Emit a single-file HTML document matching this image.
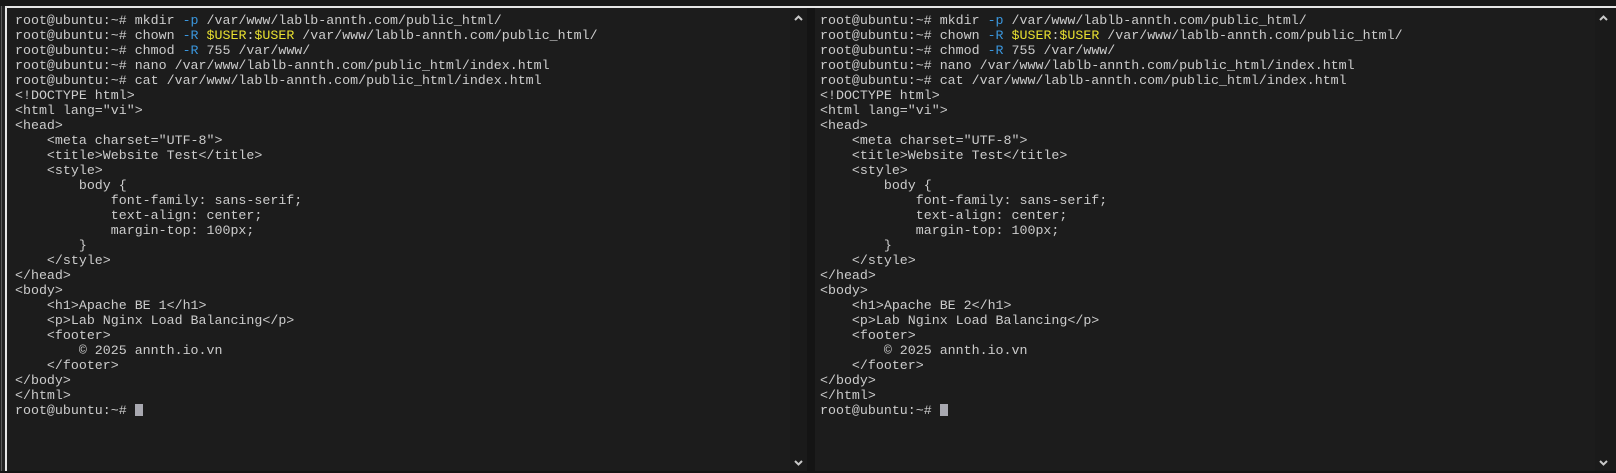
<!DOCTYPE html>
<html><head><meta charset="utf-8"><style>
html,body{margin:0;padding:0;width:1616px;height:473px;overflow:hidden;background:#1c1c1c;position:relative}
.a{position:absolute}
pre{margin:0;font-family:"Liberation Mono",monospace;font-size:13.3px;line-height:15px;color:#cccccc;position:absolute;white-space:pre}
.b{color:#3a96dd}.y{color:#e8e030}
.cur{display:inline-block;width:8px;height:12px;background:#a8a8b0;vertical-align:-2px}
svg{position:absolute}
</style></head><body>
<div class="a" style="left:0;top:0;width:1616px;height:6px;background:#181818"></div>
<div class="a" style="left:5px;top:6px;width:1611px;height:2px;background:#e6e6e6"></div>
<div class="a" style="left:0;top:6px;width:5px;height:467px;background:#222"></div>
<div class="a" style="left:1px;top:6px;width:1px;height:467px;background:#5a5a5a"></div>
<div class="a" style="left:5px;top:6px;width:2px;height:467px;background:#e6e6e6"></div>
<div class="a" style="left:790px;top:8px;width:17px;height:465px;background:#1a1a1a"></div>
<div class="a" style="left:807px;top:8px;width:8px;height:465px;background:#141414"></div>
<div class="a" style="left:1595px;top:8px;width:21px;height:465px;background:#1a1a1a"></div>
<div class="a" style="left:0;top:471px;width:1616px;height:2px;background:#141414"></div>
<svg style="left:794px;top:15px" width="9" height="6"><path d="M1 5 L4.5 1.5 L8 5" stroke="#c8c8c8" stroke-width="2" fill="none"/></svg>
<svg style="left:794px;top:460px" width="9" height="6"><path d="M1 1 L4.5 4.5 L8 1" stroke="#c8c8c8" stroke-width="2" fill="none"/></svg>
<svg style="left:1599px;top:15px" width="9" height="6"><path d="M1 5 L4.5 1.5 L8 5" stroke="#c8c8c8" stroke-width="2" fill="none"/></svg>
<svg style="left:1599px;top:460px" width="9" height="6"><path d="M1 1 L4.5 4.5 L8 1" stroke="#c8c8c8" stroke-width="2" fill="none"/></svg>
<pre style="left:15px;top:13px">root@ubuntu:~# mkdir <span class="b">-p</span> /var/www/lablb-annth.com/public_html/
root@ubuntu:~# chown <span class="b">-R</span> <span class="y">$USER</span>:<span class="y">$USER</span> /var/www/lablb-annth.com/public_html/
root@ubuntu:~# chmod <span class="b">-R</span> 755 /var/www/
root@ubuntu:~# nano /var/www/lablb-annth.com/public_html/index.html
root@ubuntu:~# cat /var/www/lablb-annth.com/public_html/index.html
&lt;!DOCTYPE html&gt;
&lt;html lang="vi"&gt;
&lt;head&gt;
    &lt;meta charset="UTF-8"&gt;
    &lt;title&gt;Website Test&lt;/title&gt;
    &lt;style&gt;
        body {
            font-family: sans-serif;
            text-align: center;
            margin-top: 100px;
        }
    &lt;/style&gt;
&lt;/head&gt;
&lt;body&gt;
    &lt;h1&gt;Apache BE 1&lt;/h1&gt;
    &lt;p&gt;Lab Nginx Load Balancing&lt;/p&gt;
    &lt;footer&gt;
        © 2025 annth.io.vn
    &lt;/footer&gt;
&lt;/body&gt;
&lt;/html&gt;
root@ubuntu:~# <span class="cur"></span></pre>
<pre style="left:820px;top:13px">root@ubuntu:~# mkdir <span class="b">-p</span> /var/www/lablb-annth.com/public_html/
root@ubuntu:~# chown <span class="b">-R</span> <span class="y">$USER</span>:<span class="y">$USER</span> /var/www/lablb-annth.com/public_html/
root@ubuntu:~# chmod <span class="b">-R</span> 755 /var/www/
root@ubuntu:~# nano /var/www/lablb-annth.com/public_html/index.html
root@ubuntu:~# cat /var/www/lablb-annth.com/public_html/index.html
&lt;!DOCTYPE html&gt;
&lt;html lang="vi"&gt;
&lt;head&gt;
    &lt;meta charset="UTF-8"&gt;
    &lt;title&gt;Website Test&lt;/title&gt;
    &lt;style&gt;
        body {
            font-family: sans-serif;
            text-align: center;
            margin-top: 100px;
        }
    &lt;/style&gt;
&lt;/head&gt;
&lt;body&gt;
    &lt;h1&gt;Apache BE 2&lt;/h1&gt;
    &lt;p&gt;Lab Nginx Load Balancing&lt;/p&gt;
    &lt;footer&gt;
        © 2025 annth.io.vn
    &lt;/footer&gt;
&lt;/body&gt;
&lt;/html&gt;
root@ubuntu:~# <span class="cur"></span></pre>
</body></html>
